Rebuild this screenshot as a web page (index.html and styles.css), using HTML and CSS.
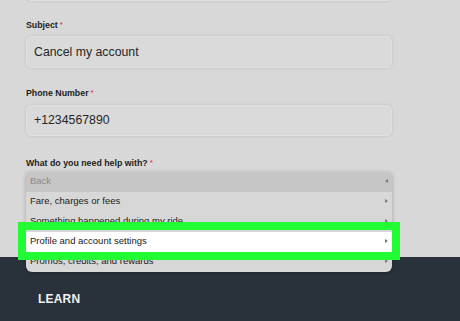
FILE: index.html
```html
<!DOCTYPE html>
<html lang="en">
<head>
<meta charset="UTF-8" />
<meta name="viewport" content="width=device-width, initial-scale=1" />
<title>Contact support</title>
<link rel="stylesheet" href="styles.css">
</head>
<body>

<div class="form">
    <div class="input input-top"></div>

    <div class="label">Subject<span class="req">*</span></div>
    <div class="input">Cancel my account</div>

    <div class="label label-gap">Phone Number<span class="req">*</span></div>
    <div class="input input-short">+1234567890</div>

    <div class="label label-gap2">What do you need help with?<span class="req">*</span></div>
    <div class="menu">
        <div class="row back">Back<span class="arrow left"></span></div>
        <div class="row">Fare, charges or fees<span class="arrow"></span></div>
        <div class="row">Something happened during my ride<span class="arrow"></span></div>
        <div class="row active">Profile and account settings<span class="arrow"></span></div>
        <div class="row">Promos, credits, and rewards<span class="arrow"></span></div>
    </div>
</div>

<div class="footer">
    <div class="footer-title">LEARN</div>
</div>

</body>
</html>
```

FILE: styles.css
```css
body {
    margin: 0;
    background: #d8d8d8;
    font-family: "Liberation Sans", Arial, sans-serif;
    color: #222;
    overflow: hidden;
}
.form {
    width: 366px;
    padding-left: 26px;
}
.input {
    box-sizing: border-box;
    height: 32px;
    margin-top: 5px;
    padding-left: 7px;
    background: #dadada;
    border: 1px solid #e0e0e0;
    border-radius: 5px;
    box-shadow: 0 0 3px rgba(0, 0, 0, 0.12);
    font-size: 12.3px;
    line-height: 30px;
    color: #262626;
}
.input-top {
    height: 31px;
    margin-top: -30px;
}
.input-short {
    height: 31px;
    margin-top: 6px;
    line-height: 29px;
}
.label {
    margin-top: 18px;
    font-size: 8.8px;
    font-weight: bold;
    line-height: 12px;
    color: #1e1e1e;
}
.label-gap {
    margin-top: 19px;
}
.label-gap2 {
    margin-top: 21px;
}
.req {
    color: #d9534f;
    font-size: 8px;
    margin-left: 2px;
    vertical-align: 1px;
}
.menu {
    position: relative;
    z-index: 1;
    margin-top: 3px;
    margin-bottom: -15px;
    background: #d7d7d7;
    border-radius: 4px 4px 6px 6px;
    box-shadow: 0 1px 4px rgba(0, 0, 0, 0.25);
}
.row {
    position: relative;
    display: flex;
    align-items: flex-start;
    justify-content: space-between;
    height: 20px;
    padding: 3px 4px 0 4px;
    box-sizing: border-box;
    font-size: 9.5px;
    line-height: 11px;
    color: #222;
}
.back {
    background: #c6c6c6;
    color: #8a8a8a;
    border-radius: 4px 4px 0 0;
}
.active {
    background: #fff;
    z-index: 2;
}
.active::after {
    content: "";
    position: absolute;
    top: -10px;
    left: -8px;
    right: -8px;
    bottom: -8px;
    border: 8px solid #22fc34;
    pointer-events: none;
}
.arrow {
    width: 0;
    height: 0;
    border-top: 2.5px solid transparent;
    border-bottom: 2.5px solid transparent;
    border-left: 3px solid #7a7a7a;
    margin-top: 4px;
}
.arrow.left {
    border-left: none;
    border-right: 3px solid #7a7a7a;
}
.footer {
    height: 64px;
    background: #29313a;
    padding: 35px 0 0 38px;
    box-sizing: border-box;
}
.footer-title {
    color: #f2f2f2;
    font-size: 12px;
    font-weight: bold;
    letter-spacing: 0.2px;
}
```
